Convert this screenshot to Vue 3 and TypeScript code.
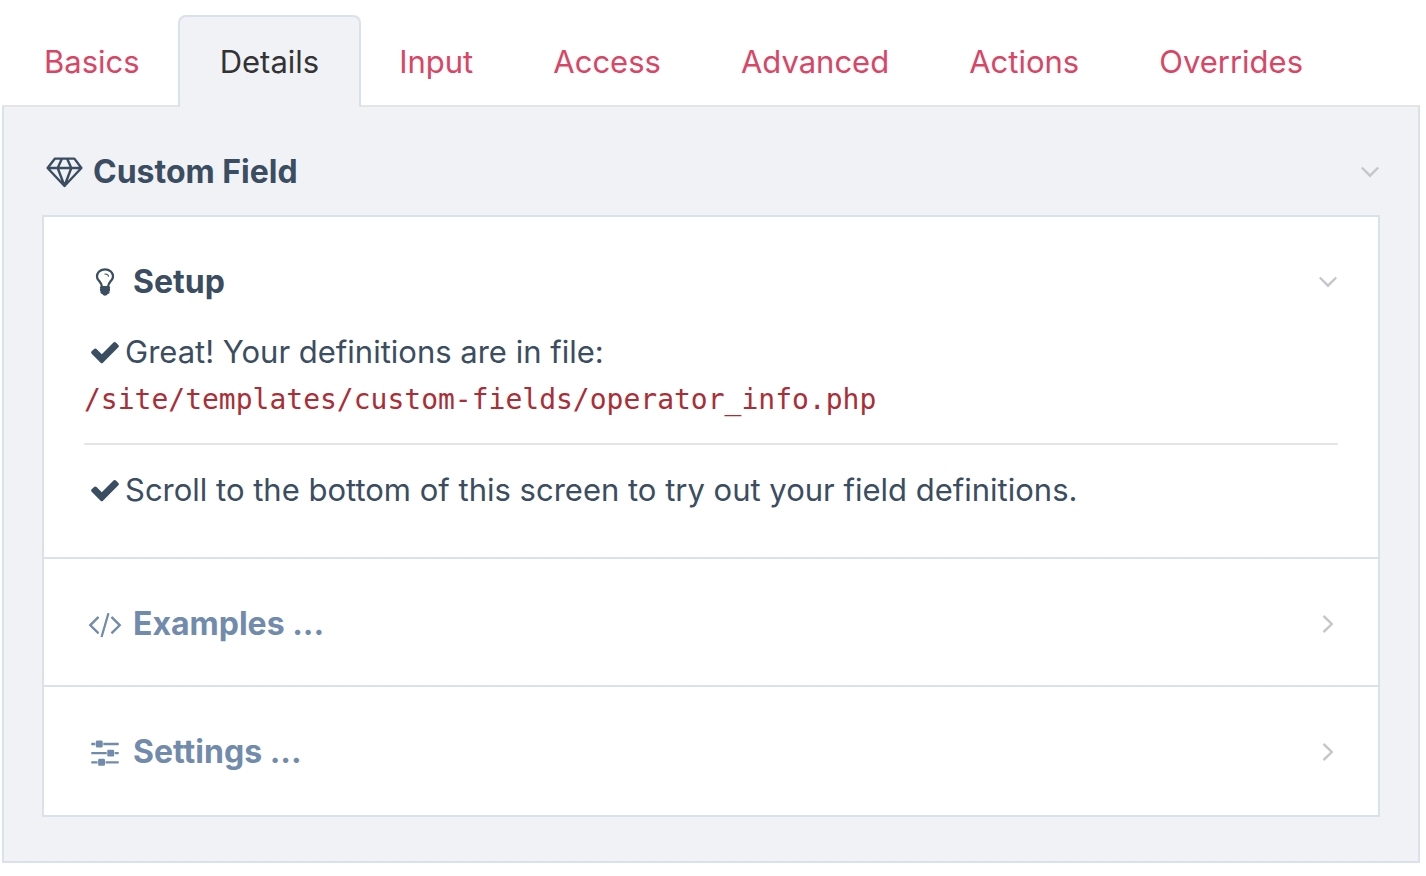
<script setup lang="ts">
import { reactive, ref } from 'vue'

const tabs = ['Basics', 'Details', 'Input', 'Access', 'Advanced', 'Actions', 'Overrides']
const activeTab = ref('Details')

const open = reactive({ field: true, setup: true, examples: false, settings: false })

const checkPath =
  'M1671 566q0 40-28 68l-724 724-136 136q-28 28-68 28t-68-28l-136-136-362-362q-28-28-28-68t28-68l136-136q28-28 68-28t68 28l294 295 656-657q28-28 68-28t68 28l136 136q28 28 28 68z'
</script>

<template>
  <main class="page">
    <nav class="tabs" aria-label="Field settings">
      <a
        v-for="tab in tabs"
        :key="tab"
        href="#"
        class="tab"
        :class="{ active: tab === activeTab }"
        :aria-current="tab === activeTab ? 'page' : undefined"
        @click.prevent="activeTab = tab"
      >{{ tab }}</a>
    </nav>

    <section class="panel">
      <h2 class="heading panel-heading">
        <button type="button" class="toggle" :aria-expanded="open.field" @click="open.field = !open.field">
          <span class="icon">
            <svg width="37" height="32" viewBox="0 0 37 32" fill="none" stroke="currentColor" stroke-width="2.4" stroke-linejoin="round" aria-hidden="true">
              <path d="M9 2.6H28.4L35.4 12L18.5 30L1.6 12ZM1.6 12H35.4M16 2.6L11.7 12L18.5 30L25.3 12L21 2.6" />
            </svg>
          </span>
          <span class="label">Custom Field</span>
          <svg class="chevron" :class="{ closed: !open.field }" width="20" height="20" viewBox="0 0 20 20" aria-hidden="true">
            <path d="M1.8 5.500L10 13.700L18.200 5.500" />
          </svg>
        </button>
      </h2>

      <div v-if="open.field" class="box">
        <section class="item">
          <h3 class="heading">
            <button type="button" class="toggle" :class="{ muted: !open.setup }" :aria-expanded="open.setup" @click="open.setup = !open.setup">
              <span class="icon">
                <svg width="32" height="32" viewBox="0 0 1792 1792" fill="currentColor" aria-hidden="true">
                  <path d="M1120 576q0 13-9.500 22.500t-22.500 9.500-22.500-9.500-9.500-22.500q0-46-54-71t-106-25q-13 0-22.500-9.500t-9.500-22.500 9.500-22.500 22.500-9.500q50 0 99.500 16t87 54 37.500 90zm160 0q0-72-34.500-134t-90-101.500-123-62-136.500-22.500-136.500 22.500-123 62-90 101.500-34.500 134q0 101 68 180 10 11 30.500 33t30.500 33q128 153 141 298h228q13-145 141-298 10-11 30.500-33t30.500-33q68-79 68-180zm128 0q0 155-103 268-45 49-74.500 87t-59.500 95.500-34 107.500q47 28 47 82 0 37-25 64 25 27 25 64 0 52-45 81 13 23 13 47 0 46-31.500 71t-77.500 25q-20 44-60 70t-87 26-87-26-60-70q-46 0-77.500-25t-31.500-71q0-24 13-47-45-29-45-81 0-37 25-64-25-27-25-64 0-54 47-82-4-50-34-107.500t-59.500-95.500-74.500-87q-103-113-103-268 0-99 44.500-184.500t117-142 164-89 186.500-32.500 186.500 32.500 164 89 117 142 44.500 184.500z" />
                </svg>
              </span>
              <span class="label">Setup</span>
              <svg class="chevron" :class="{ closed: !open.setup }" width="20" height="20" viewBox="0 0 20 20" aria-hidden="true">
                <path d="M1.8 5.500L10 13.700L18.200 5.500" />
              </svg>
            </button>
          </h3>
          <div v-if="open.setup" class="content">
            <p class="line">
              <span class="icon">
                <svg width="32" height="32" viewBox="0 0 1792 1792" fill="currentColor" aria-hidden="true"><path :d="checkPath" /></svg>
              </span>
              <span>Great! Your definitions are in file:</span>
            </p>
            <code class="path">/site/templates/custom-fields/operator_info.php</code>
            <hr class="rule" />
            <p class="line">
              <span class="icon">
                <svg width="32" height="32" viewBox="0 0 1792 1792" fill="currentColor" aria-hidden="true"><path :d="checkPath" /></svg>
              </span>
              <span>Scroll to the bottom of this screen to try out your field definitions.</span>
            </p>
          </div>
        </section>

        <section class="item">
          <h3 class="heading">
            <button type="button" class="toggle" :class="{ muted: !open.examples }" :aria-expanded="open.examples" @click="open.examples = !open.examples">
              <span class="icon">
                <svg width="34" height="32" viewBox="0 0 1920 1792" fill="currentColor" aria-hidden="true">
                  <path d="M617 1399l-50 50q-10 10-23 10t-23-10l-466-466q-10-10-10-23t10-23l466-466q10-10 23-10t23 10l50 50q10 10 10 23t-10 23l-393 393 393 393q10 10 10 23t-10 23zm591-1067l-373 1291q-4 13-15.500 19.500t-23.500 2.500l-62-17q-13-4-19.500-15.500t-2.500-24.500l373-1291q4-13 15.500-19.500t23.500-2.500l62 17q13 4 19.500 15.500t2.500 24.500zm657 651l-466 466q-10 10-23 10t-23-10l-50-50q-10-10-10-23t10-23l393-393-393-393q-10-10-10-23t10-23l50-50q10-10 23-10t23 10l466 466q10 10 10 23t-10 23z" />
                </svg>
              </span>
              <span class="label">Examples ...</span>
              <svg class="chevron" :class="{ closed: !open.examples }" width="20" height="20" viewBox="0 0 20 20" aria-hidden="true">
                <path d="M1.8 5.500L10 13.700L18.200 5.500" />
              </svg>
            </button>
          </h3>
        </section>

        <section class="item">
          <h3 class="heading">
            <button type="button" class="toggle" :class="{ muted: !open.settings }" :aria-expanded="open.settings" @click="open.settings = !open.settings">
              <span class="icon">
                <svg width="32" height="32" viewBox="0 0 1792 1792" fill="currentColor" aria-hidden="true">
                  <path d="M480 1408v128h-352v-128h352zm352-128q26 0 45 19t19 45v256q0 26-19 45t-45 19h-256q-26 0-45-19t-19-45v-256q0-26 19-45t45-19h256zm160-384v128h-864v-128h864zm-640-512v128h-224v-128h224zm1312 1024v128h-736v-128h736zm-960-1152q26 0 45 19t19 45v256q0 26-19 45t-45 19h-256q-26 0-45-19t-19-45v-256q0-26 19-45t45-19h256zm640 512q26 0 45 19t19 45v256q0 26-19 45t-45 19h-256q-26 0-45-19t-19-45v-256q0-26 19-45t45-19h256zm320 128v128h-224v-128h224zm0-512v128h-864v-128h864z" />
                </svg>
              </span>
              <span class="label">Settings ...</span>
              <svg class="chevron" :class="{ closed: !open.settings }" width="20" height="20" viewBox="0 0 20 20" aria-hidden="true">
                <path d="M1.8 5.500L10 13.700L18.200 5.500" />
              </svg>
            </button>
          </h3>
        </section>
      </div>
    </section>
  </main>
</template>

<style>
body {
  background: #fff;
}
</style>

<style scoped>
.page {
  padding: 15px 6px 12px 2px;
  font-family: Inter, "Liberation Sans", sans-serif;
  font-size: 31px;
  line-height: 48px;
  color: #3b4d61;
}

.tabs {
  display: flex;
}

.tab {
  box-sizing: border-box;
  height: 92px;
  padding: 21px 40px 0;
  border: 2px solid transparent;
  border-bottom: 0;
  border-radius: 8px 8px 0 0;
  color: #db4565;
  text-decoration: none;
}

.tab + .tab {
  margin-left: -4px;
}

.tab.active {
  z-index: 1;
  border-color: #d9e1ea;
  background: #f0f2f6;
  color: #333;
}

.panel {
  margin-top: -2px;
  padding: 41px 38px 44px;
  border: 2px solid #d9e1ea;
  border-top-color: #e5e5e5;
  background: #f0f2f6;
}

.heading {
  margin: 0;
  font-size: 32px;
  font-weight: 700;
}

.panel-heading {
  padding-left: 2px;
}

.toggle {
  display: flex;
  align-items: center;
  width: 100%;
  padding: 0;
  border: 0;
  background: none;
  color: inherit;
  font: inherit;
  line-height: 48px;
  text-align: left;
  cursor: pointer;
}

.toggle.muted {
  color: #708bab;
}

.icon {
  display: flex;
  flex: none;
  justify-content: center;
  width: 41px;
}

.label {
  flex: 1;
  padding-left: 8px;
}

.chevron {
  flex: none;
  fill: none;
  stroke: #c5c5cb;
  stroke-width: 2.4;
}

.chevron.closed {
  transform: rotate(-90deg);
}

.box {
  margin-top: 19px;
  border: 2px solid #d9e1ea;
  background: #fff;
}

.item {
  padding: 41px 40px 37px;
}

.item + .item {
  border-top: 2px solid #d9e1ea;
}

.item:last-child {
  padding-bottom: 39px;
}

.content {
  padding: 22px 0 6px;
}

.line {
  display: flex;
  margin: 0;
}

.line .icon {
  align-items: center;
  height: 48px;
}

.path {
  display: block;
  color: #ab2e37;
  font-family: "DejaVu Sans Mono", "Liberation Mono", monospace;
  font-size: 28px;
  overflow-wrap: anywhere;
}

.rule {
  margin: 19px 0 21px;
  border: 0;
  border-top: 2px solid #e5e5e5;
}
</style>
